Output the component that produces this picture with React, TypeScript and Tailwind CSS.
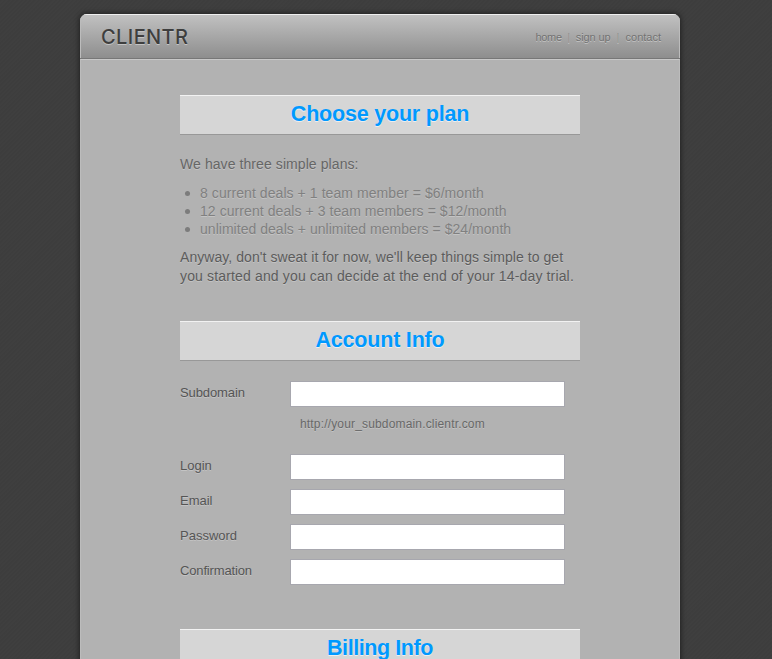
import type { ReactNode } from "react";

const plans = [
  { text: "8 current deals + 1 team member = $6/month", spacing: "tracking-[0.07px]" },
  { text: "12 current deals + 3 team members = $12/month", spacing: "tracking-[0.07px]" },
  { text: "unlimited deals + unlimited members = $24/month", spacing: "tracking-[0.03px]" },
];

const credentials = [
  { name: "login", label: "Login", type: "text" },
  { name: "email", label: "Email", type: "email" },
  { name: "password", label: "Password", type: "password" },
  { name: "confirmation", label: "Confirmation", type: "password", spacing: "tracking-[-0.15px]" },
];

function SectionHeading({ spacing, children }: { spacing: string; children: ReactNode }) {
  return (
    <h2 className={`h-10 border-t border-b border-t-[#f2f2f2] border-b-[#989898] bg-[#d6d6d6] text-center text-[21.5px] leading-[36px] font-bold text-[#0099ff] [text-shadow:0_1px_0_#eee] ${spacing}`}>
      {children}
    </h2>
  );
}

type FieldProps = { name: string; label: string; type: string; spacing?: string };

function Field({ name, label, type, spacing = "tracking-normal" }: FieldProps) {
  return (
    <div className="flex h-[26px] items-start">
      <label htmlFor={name} className={`w-[110px] pt-px text-[13px] leading-[22px] text-[#555] ${spacing}`}>
        {label}
      </label>
      <input id={name} name={name} type={type} className="h-[26px] w-[275px] border border-[#a7a7ae] bg-white px-1 text-[13px] outline-none" />
    </div>
  );
}

export default function App() {
  return (
    <div className="h-[659px] overflow-hidden bg-[#3e3e3e] bg-[repeating-linear-gradient(135deg,#3d3d3d_0_1px,#3f3f3f_2px_3px)] pt-3.5 pl-20 font-['Liberation_Sans',Arial,sans-serif] [text-shadow:0_1px_0_#c4c4c4]">
      <div className="h-[700px] w-[600px] overflow-hidden rounded-t-[7px] bg-[#b2b2b2] shadow-[0_0_5px_1px_#222]">
        <header className="flex h-[45px] justify-between border-b border-[#777] bg-linear-to-b from-[#c2c2c2] to-[#8e8e8e] pr-[19px] pl-[21px] shadow-[inset_0_1px_0_#eee,inset_1px_0_0_#bcbcbc,inset_-1px_0_0_#bcbcbc]">
          <h1 className="font-[Inter,sans-serif] text-[20px] leading-[46px] font-medium tracking-[0.4px] text-[#3e3e3e]">CLIENTR</h1>
          <nav className="flex text-[11px] leading-[46px] text-[#727272]">
            <a href="#home" className="tracking-[-0.3px]">home</a>
            <span className="w-[14px] text-center text-[#8e8e8e]">|</span>
            <a href="#signup" className="tracking-[-0.1px]">sign up</a>
            <span className="w-[15px] text-center text-[#8e8e8e]">|</span>
            <a href="#contact">contact</a>
          </nav>
        </header>

        <main className="h-[655px] border-x border-t border-x-[#bcbcbc] border-t-[#c8c8c8] px-[99px] pt-[35px]">
          <section>
            <SectionHeading spacing="tracking-[-0.2px]">Choose your plan</SectionHeading>
            <p className="mt-5 text-[14px] leading-[19px] tracking-[0.08px] text-[#666]">We have three simple plans:</p>
            <ul className="mt-2.5 text-[14px] leading-[18px] text-[#808080]">
              {plans.map((plan) => (
                <li key={plan.text} className={`flex before:mt-[7px] before:mr-[10.5px] before:ml-[4.5px] before:size-[5px] before:rounded-full before:bg-[#7c7c7c] ${plan.spacing}`}>
                  {plan.text}
                </li>
              ))}
            </ul>
            <p className="mt-2.5 text-[14px] leading-[19px] whitespace-nowrap text-[#5c5c5c]">
              <span className="tracking-[0.06px]">Anyway, don't sweat it for now, we'll keep things simple to get</span>
              <br />
              <span className="tracking-[0.15px]">you started and you can decide at the end of your 14-day trial.</span>
            </p>
          </section>

          <section className="mt-[35px]">
            <SectionHeading spacing="tracking-[-0.2px]">Account Info</SectionHeading>
            <div className="mt-5">
              <Field name="subdomain" label="Subdomain" type="text" spacing="tracking-[-0.1px]" />
              <p className="mt-2 pl-[120px] text-[12px] leading-[18px] tracking-[0.165px] text-[#686868]">http://your_subdomain.clientr.com</p>
            </div>
            <div className="mt-[21px] flex flex-col gap-[9px]">
              {credentials.map((field) => (
                <Field key={field.name} {...field} />
              ))}
            </div>
          </section>

          <section className="mt-11">
            <SectionHeading spacing="tracking-[-0.42px]">Billing Info</SectionHeading>
          </section>
        </main>
      </div>
    </div>
  );
}
